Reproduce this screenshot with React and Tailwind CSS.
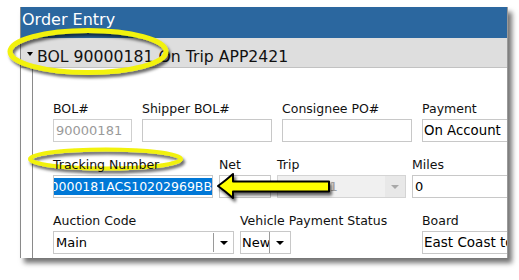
import React from "react";

function Arrow({ gray }) {
  return (
    <span
      className={
        gray
          ? "block w-0 h-0 border-x-[4px] border-t-[4px] border-x-transparent border-t-[#a8a8a8]"
          : "block w-0 h-0 border-x-[4px] border-t-[4px] border-x-transparent border-t-black"
      }
    />
  );
}

function Label({ children }) {
  return (
    <div className="h-[14px] text-[12.5px] leading-[14px] whitespace-nowrap text-[#111]">
      {children}
    </div>
  );
}

export default function App() {
  return (
    <div className="relative w-[519px] h-[280px] overflow-hidden bg-white font-['DejaVu_Sans',sans-serif] text-black">
      <div className="ml-[20px] pt-[7px]">
        <div className="w-[488px] h-[251px] border-l border-r border-l-[#8a8a8a] border-r-[#9a9a9a] bg-white shadow-[4px_5px_5px_rgba(0,0,0,0.55)] overflow-hidden flex flex-col">
          <div className="h-[31px] shrink-0 bg-[#2b679f] text-white text-[16px] leading-[19px] pt-[3px] pl-[1px]">
            Order Entry
          </div>
          <div className="h-[30px] shrink-0 bg-[#dedede] border-b border-[#c2c2c2] flex items-start pt-[9px] pl-[6px] text-[15.7px] leading-[19px] text-[#111] whitespace-nowrap">
            <span className="mt-[5px] mr-[4px] w-0 h-0 border-x-[3.5px] border-t-[4px] border-x-transparent border-t-black" />
            <span>BOL 90000181 On Trip APP2421</span>
          </div>
          <div className="flex-1 ml-[11px] border-l border-[#8a8a8a] pl-[20px] pt-[34px] flex flex-col gap-[16px] overflow-hidden">
            {/* Row 1 */}
            <div className="flex gap-[10px]">
              <div className="w-[79px] shrink-0 flex flex-col">
                <Label>BOL#</Label>
                <div className="mt-[3px] h-[23px] border border-[#cfcfcf] text-[13px] leading-[21px] px-[2px] text-[#9a9a9a]">
                  90000181
                </div>
              </div>
              <div className="w-[130px] shrink-0 flex flex-col">
                <Label>Shipper BOL#</Label>
                <div className="mt-[3px] h-[23px] border border-[#c8c8c8]" />
              </div>
              <div className="w-[130px] shrink-0 flex flex-col">
                <Label>Consignee PO#</Label>
                <div className="mt-[3px] h-[23px] border border-[#c8c8c8]" />
              </div>
              <div className="w-[120px] shrink-0 flex flex-col">
                <Label>Payment</Label>
                <div className="mt-[3px] h-[23px] border border-[#c8c8c8] text-[13.3px] leading-[21px] px-[1px] whitespace-nowrap">
                  On Account
                </div>
              </div>
            </div>
            {/* Row 2 */}
            <div className="flex gap-[6px]">
              <div className="w-[160px] shrink-0 flex flex-col">
                <div className="relative z-10 h-[14px] text-[12.5px] leading-[14px] whitespace-nowrap text-[#111]">
                  Tracking Number
                </div>
                <div className="mt-[3px] h-[23px] border border-[#c8c8c8] flex items-center justify-end overflow-hidden">
                  <span className="shrink-0 whitespace-nowrap bg-[#0078d7] text-white text-[12.5px] leading-[17px]">
                    90000181ACS10202969BB
                  </span>
                </div>
              </div>
              <div className="w-[52px] shrink-0 flex flex-col">
                <Label>Net</Label>
                <div className="mt-[3px] h-[23px] border border-[#c8c8c8]" />
              </div>
              <div className="w-[129px] shrink-0 flex flex-col">
                <Label>Trip</Label>
                <div className="mt-[3px] h-[23px] border border-[#d4d4d4] bg-[#f0f0f0] flex text-[13px] text-[#a0a0a0]">
                  <div className="flex-1 pl-[2px] leading-[21px] whitespace-nowrap overflow-hidden">APP2421</div>
                  <div className="w-[20px] bg-[#e8e8e8] flex items-center justify-center">
                    <Arrow gray />
                  </div>
                </div>
              </div>
              <div className="w-[120px] shrink-0 flex flex-col">
                <Label>Miles</Label>
                <div className="mt-[3px] h-[23px] border border-[#c8c8c8] text-[13px] leading-[21px] px-[2px]">
                  0
                </div>
              </div>
            </div>
            {/* Row 3 */}
            <div className="flex gap-[6px]">
              <div className="w-[181px] shrink-0 flex flex-col">
                <Label>Auction Code</Label>
                <div className="mt-[3px] h-[23px] border border-[#c8c8c8] flex text-[13px]">
                  <div className="flex-1 pl-[2px] leading-[21px]">Main</div>
                  <div className="w-[20px] my-[1px] border-l border-[#9a9a9a] flex items-center justify-center">
                    <Arrow />
                  </div>
                </div>
              </div>
              <div className="w-[51px] shrink-0 flex flex-col">
                <div className="h-[14px] text-[12.5px] leading-[14px] whitespace-nowrap text-[#111]">
                  Vehicle Payment Status
                </div>
                <div className="mt-[3px] h-[23px] border border-[#c8c8c8] flex text-[13px]">
                  <div className="w-[28px] pl-[1px] leading-[21px] overflow-hidden whitespace-nowrap">New</div>
                  <div className="flex-1 border-l border-[#9a9a9a] flex items-center justify-center">
                    <Arrow />
                  </div>
                </div>
              </div>
              <div className="ml-[125px] w-[120px] shrink-0 flex flex-col">
                <Label>Board</Label>
                <div className="mt-[3px] h-[23px] border border-[#c8c8c8] text-[13.5px] leading-[21px] px-[1px] whitespace-nowrap overflow-hidden">
                  East Coast to West
                </div>
              </div>
            </div>
          </div>
        </div>
      </div>

      <svg
        className="absolute inset-0 pointer-events-none"
        width="519"
        height="280"
        viewBox="0 0 519 280"
      >
        <defs>
          <filter id="ds" x="-15%" y="-40%" width="140%" height="190%">
            <feDropShadow dx="2" dy="3" stdDeviation="1.8" floodColor="#000" floodOpacity="0.6" />
          </filter>
        </defs>
        <ellipse cx="88" cy="51.5" rx="78" ry="21" fill="none" stroke="#f2f20a" strokeWidth="5" filter="url(#ds)" />
        <ellipse cx="105.5" cy="159" rx="75.5" ry="9.5" fill="none" stroke="#f2f20a" strokeWidth="4" filter="url(#ds)" />
        <path
          d="M218 186 Q225 181 233 174 L233 181.5 L329 181.5 L329 191.5 L233 191.5 L233 198 Q225 191 218 186 Z"
          fill="#ffff00"
          stroke="#000"
          strokeWidth="2"
          strokeLinejoin="round"
          filter="url(#ds)"
        />
      </svg>
    </div>
  );
}
